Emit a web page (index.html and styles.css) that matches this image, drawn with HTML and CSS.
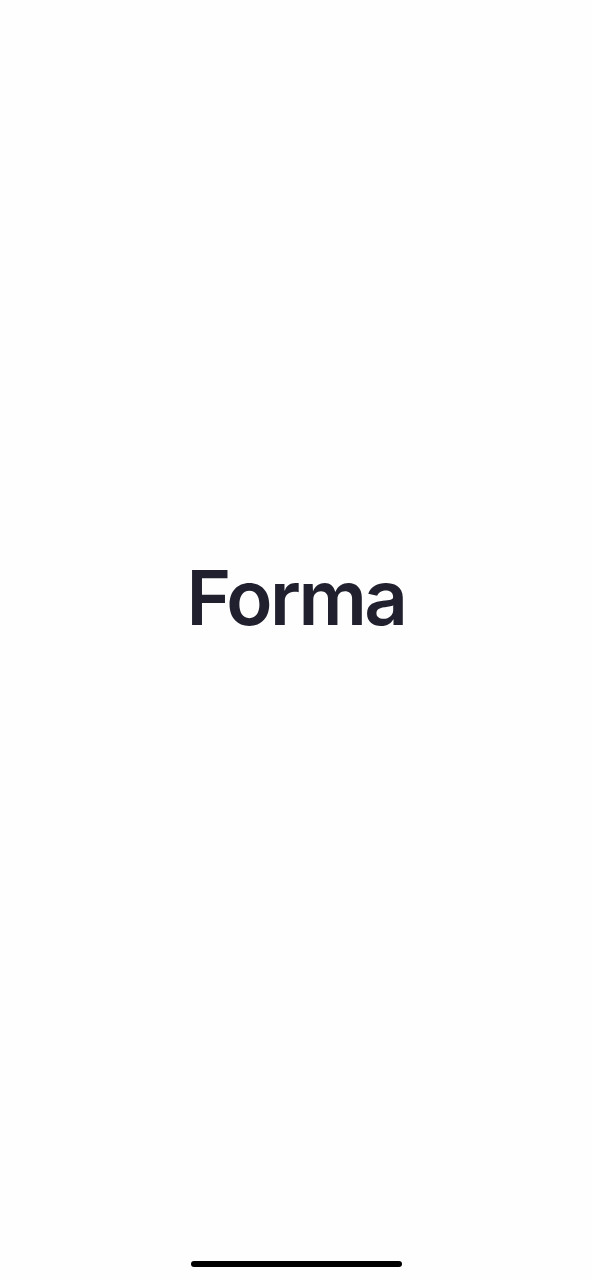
FILE: index.html
```html
<!DOCTYPE html>
<html lang="en">
<head>
<meta charset="utf-8">
<title>Forma</title>
<link rel="stylesheet" href="styles.css">
</head>
<body>
<div class="screen">
  <main class="splash">
    <h1 class="brand">Forma</h1>
  </main>
  <footer class="home-area">
    <div class="home-indicator"></div>
  </footer>
</div>
</body>
</html>
```
FILE: styles.css
```css
html, body {
  margin: 0;
  padding: 0;
  background: #ffffff;
}
.screen {
  width: 592px;
  height: 1280px;
  display: flex;
  flex-direction: column;
  background: #fefefe;
}
.splash {
  flex: 1;
  display: flex;
  align-items: center;
  justify-content: center;
  padding-top: 4px;
}
.brand {
  margin: 0;
  font-family: Inter, "Liberation Sans", sans-serif;
  font-weight: 600;
  font-size: 76px;
  line-height: 1;
  letter-spacing: -2.5px;
  color: #20202e;
}
.home-area {
  height: 90px;
  display: flex;
  justify-content: center;
  align-items: flex-end;
  padding-bottom: 13px;
  box-sizing: border-box;
}
.home-indicator {
  width: 211px;
  height: 6px;
  border-radius: 3px;
  background: #000000;
}
```
